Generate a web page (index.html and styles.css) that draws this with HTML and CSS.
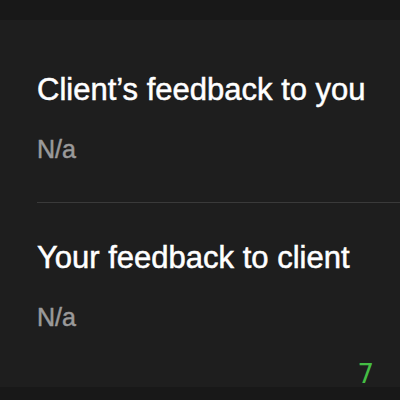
FILE: index.html
```html
<!DOCTYPE html>
<html>
<head>
<meta charset="utf-8">
<link rel="stylesheet" href="styles.css">
</head>
<body>
<div class="topbar"></div>
<main class="panel">
  <section class="block">
    <h2 class="title">Client’s feedback to you</h2>
    <p class="value">N/a</p>
  </section>
  <div class="divider"></div>
  <section class="block second">
    <h2 class="title">Your feedback to client</h2>
    <p class="value">N/a</p>
  </section>
  <div class="footer"><span class="count">7</span></div>
</main>
<div class="bottombar"></div>
</body>
</html>
```
FILE: styles.css
```css
html, body {
  margin: 0;
  padding: 0;
  width: 400px;
  height: 400px;
  overflow: hidden;
  background: #1e1e1e;
  font-family: "Liberation Sans", Arial, sans-serif;
}
.topbar {
  height: 20px;
  background: #181818;
}
.panel {
  height: 367px;
  background: #1e1e1e;
  display: flex;
  flex-direction: column;
}
.block {
  padding-left: 37px;
}
.title {
  margin: 0;
  padding-top: 52px;
  font-size: 31px;
  line-height: 36px;
  font-weight: 400;
  color: #ffffff;
  -webkit-text-stroke: 0.5px #ffffff;
}
.value {
  margin: 0;
  padding-top: 28px;
  font-size: 25px;
  line-height: 26px;
  font-weight: 400;
  color: #9a9a9a;
  -webkit-text-stroke: 0.5px #9a9a9a;
}
.divider {
  margin-top: 40px;
  margin-left: 37px;
  height: 1px;
  background: #3a3a3a;
}
.second .title {
  padding-top: 37px;
}
.footer {
  margin-top: auto;
  display: flex;
  justify-content: flex-end;
  padding-right: 26px;
  padding-bottom: 0;
}
.count {
  font-family: "DejaVu Sans", sans-serif;
  font-size: 26px;
  color: #44bd44;
  line-height: 26px;
}
.bottombar {
  height: 13px;
  background: #181818;
}
```
